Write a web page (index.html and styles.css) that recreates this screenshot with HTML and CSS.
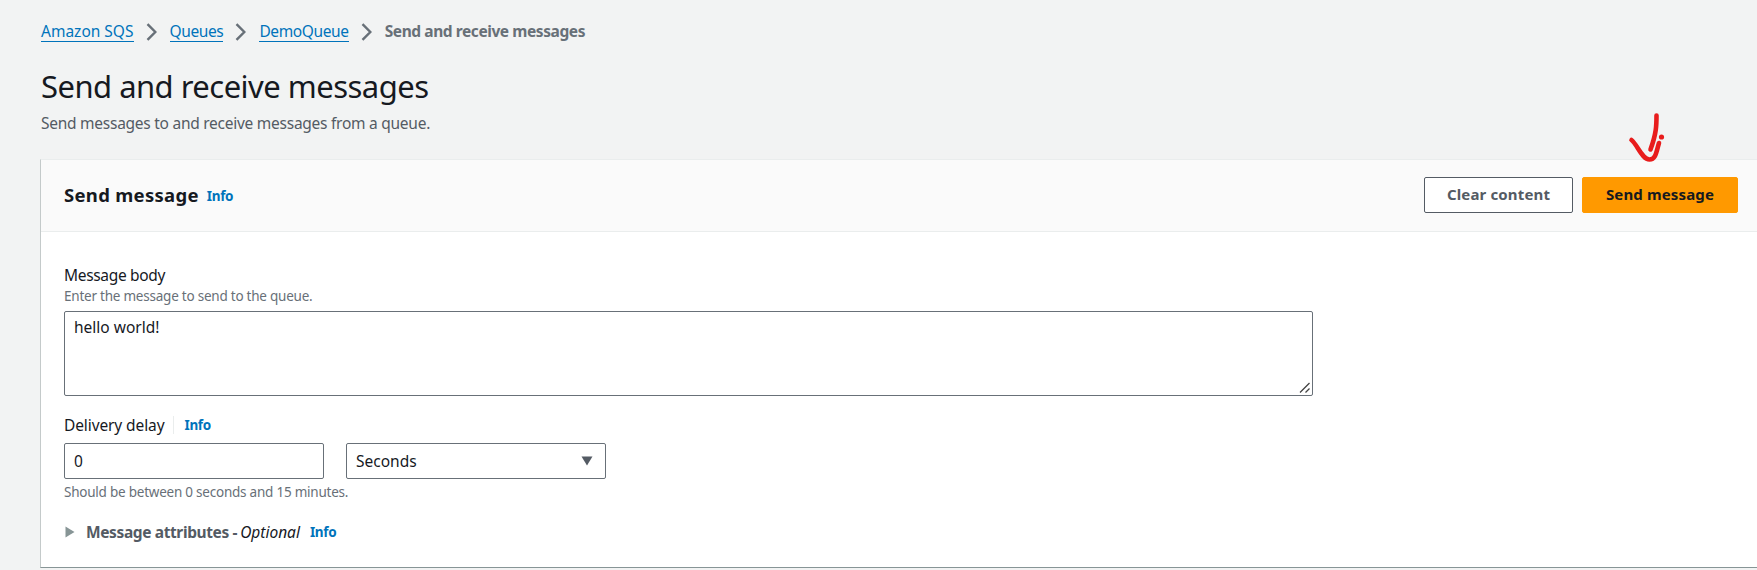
FILE: index.html
```html
<!DOCTYPE html>
<html lang="en">
<head>
<meta charset="utf-8">
<title>Send and receive messages</title>
<link rel="stylesheet" href="styles.css">
</head>
<body>
<main class="page">
  <nav class="breadcrumbs">
    <a class="crumb" href="#">Amazon SQS</a>
    <svg class="chevron" viewBox="0 0 12 18"><path d="M1.500 1.200 9.300 9 1.500 16.800"/></svg>
    <a class="crumb tight" href="#">Queues</a>
    <svg class="chevron" viewBox="0 0 12 18"><path d="M1.500 1.200 9.300 9 1.500 16.800"/></svg>
    <a class="crumb tight" href="#">DemoQueue</a>
    <svg class="chevron" viewBox="0 0 12 18"><path d="M1.500 1.200 9.300 9 1.500 16.800"/></svg>
    <span class="current">Send and receive messages</span>
  </nav>
  <h1 class="title">Send and receive messages</h1>
  <p class="subtitle">Send messages to and receive messages from a queue.</p>
  <section class="panel">
    <header class="panel-header">
      <h2 class="panel-title">Send message</h2>
      <a class="info" href="#">Info</a>
      <div class="actions">
        <button class="btn">Clear content</button>
        <button class="btn primary">Send message</button>
        <svg class="arrow" viewBox="0 0 40 54"><path d="M28.500 5.500C28.500 15 28.500 23 22.500 39.500M3.500 30C9 34 14 49.500 21.500 49.500C28 49.500 28.500 41 31 33"/><circle cx="33.500" cy="27" r="2.600"/></svg>
      </div>
    </header>
    <div class="panel-body">
      <div class="label">Message body</div>
      <div class="hint">Enter the message to send to the queue.</div>
      <div class="control textarea">hello world!
        <svg class="grip" viewBox="0 0 12 12"><path d="M1 10.500 10.500 1M6.500 10.500 10.500 6.500"/></svg>
      </div>
      <div class="label delay">Delivery delay<i class="divider"></i><a class="info" href="#">Info</a></div>
      <div class="fields">
        <div class="control field">0</div>
        <div class="control field">Seconds<svg class="caret" viewBox="0 0 12 10"><path d="M.5.500h11L6 9.500z"/></svg></div>
      </div>
      <div class="hint constraint">Should be between 0 seconds and 15 minutes.</div>
      <div class="attributes">
        <svg class="expand" viewBox="0 0 10 12"><path d="M.5.500 9.500 6 .5 11.500z"/></svg>
        <b class="attr-name">Message attributes -</b><em class="optional">Optional</em><a class="info" href="#">Info</a>
      </div>
    </div>
  </section>
</main>
</body>
</html>
```
FILE: styles.css
```css
* { box-sizing: border-box; }
body { margin: 0; background: #f2f3f3; color: #16191f; font-family: "Noto Sans", sans-serif; font-size: 15.5px; overflow: hidden; }
h1, h2, p { margin: 0; font-weight: 400; }
a { color: #0073bb; text-decoration: none; }
.page { padding: 20px 0 0 41px; height: 570px; }
.breadcrumbs { display: flex; height: 23px; line-height: 23px; }
.crumb { height: 22px; border-bottom: 1px solid #0073bb; }
.tight { letter-spacing: -0.38px; }
.chevron { width: 12px; height: 18px; margin: 3px 12px 0; }
.chevron path { fill: none; stroke: #687078; stroke-width: 2.4; }
.current { color: #687078; font-weight: 700; letter-spacing: -0.42px; }
.title { font-size: 31px; line-height: 44px; margin-top: 21px; letter-spacing: -0.53px; }
.subtitle { color: #545b64; line-height: 24px; margin-top: 3px; letter-spacing: -0.26px; }
.panel { margin: 24px 0 0 -1px; width: 1741px; height: 409px; background: #fff; border: 1px solid #d5dbdb; border-left-color: #c4caca; border-top-color: #eaeded; border-bottom: 1px solid #879596; }
.panel-header { display: flex; align-items: center; height: 72px; padding: 0 42px 0 23px; background: #fafafa; border-bottom: 1px solid #eaeded; }
.panel-title { font-size: 18.5px; font-weight: 700; letter-spacing: 0.3px; margin-bottom: 3px; }
.info { font-size: 13.5px; font-weight: 700; margin-left: 10px; letter-spacing: -0.35px; }
.panel-header .info { margin-left: 8px; }
.actions { position: relative; display: flex; gap: 9px; margin: 0 0 2px auto; }
.btn { width: 149px; height: 36px; border: 1px solid #545b64; border-radius: 2px; background: #fff; color: #545b64; font: 700 15px "Noto Sans", sans-serif; letter-spacing: 0.15px; padding: 0 0 2px; }
.primary { width: 156px; background: #ff9900; border-color: #ff9900; color: #16191f; }
.arrow { position: absolute; left: 204px; top: -67px; width: 40px; height: 54px; }
.arrow path { fill: none; stroke: #e81c1c; stroke-width: 4.6; stroke-linecap: round; }
.arrow circle { fill: #e81c1c; }
.panel-body { padding: 32px 23px; }
.label { line-height: 22px; display: flex; letter-spacing: -0.33px; }
.hint { font-size: 13.5px; line-height: 20px; color: #687078; letter-spacing: -0.23px; }
.control { border: 1px solid #687078; border-radius: 2px; background: #fff; }
.textarea { position: relative; width: 1249px; height: 85px; margin-top: 5px; padding: 4px 9px; line-height: 22px; }
.grip { position: absolute; right: 1px; bottom: 1px; width: 12px; height: 12px; }
.grip path { fill: none; stroke: #444; stroke-width: 1.3; }
.delay { margin-top: 18px; align-items: center; letter-spacing: -0.1px; }
.divider { width: 1px; height: 18px; background: #eaeded; margin-left: 9px; }
.fields { display: flex; gap: 22px; margin-top: 7px; }
.field { width: 260px; height: 36px; padding: 0 12px 0 9px; display: flex; align-items: center; justify-content: space-between; }
.caret { width: 12px; height: 10px; fill: #545b64; }
.constraint { margin-top: 3px; }
.attributes { display: flex; align-items: center; margin-top: 18px; line-height: 24px; }
.expand { width: 10px; height: 12px; margin: 0 11px 0 1px; fill: #879596; }
.attr-name { color: #545b64; letter-spacing: -0.38px; }
.optional { margin-left: 3px; }
```
